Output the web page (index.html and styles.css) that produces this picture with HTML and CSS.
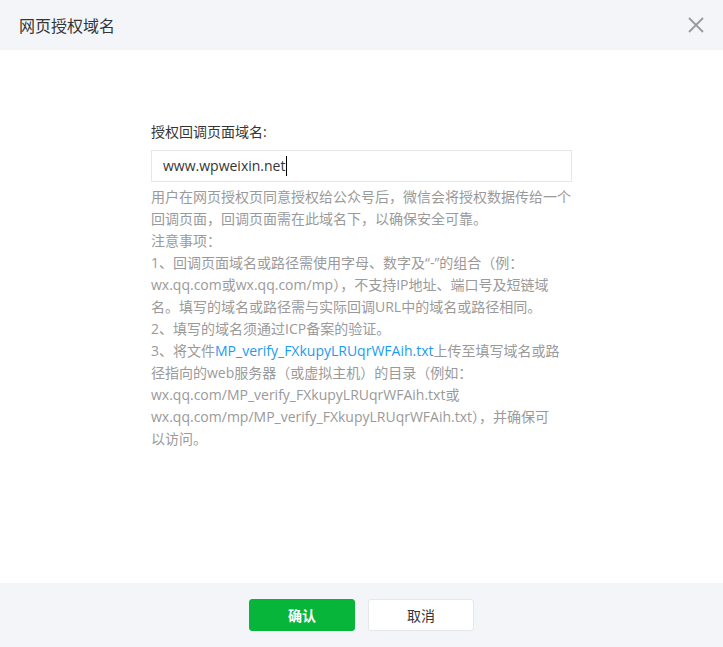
FILE: index.html
```html
<!DOCTYPE html>
<html lang="zh-CN">
<head>
  <meta charset="UTF-8" />
  <meta name="viewport" content="width=device-width, initial-scale=1.0" />
  <title>网页授权域名</title>
  <link rel="stylesheet" href="styles.css">
</head>
<body>
  <div class="dialog">
    <!-- 标题栏 -->
    <div class="dialog-hd">
      <h3>网页授权域名</h3>
      <button class="close-btn" aria-label="关闭">
        <svg width="16" height="16" viewBox="0 0 16 16">
          <path d="M1 1L15 15M15 1L1 15" stroke="#9a9a9a" stroke-width="1.8" fill="none" />
        </svg>
      </button>
    </div>

    <!-- 内容 -->
    <div class="dialog-bd">
      <div class="form">
        <label class="form-label">授权回调页面域名:</label>
        <div class="input-box">www.wpweixin.net<span class="caret"></span></div>
        <div class="tips">
          <p>用户在网页授权页同意授权给公众号后，微信会将授权数据传给一个<br>回调页面，回调页面需在此域名下，以确保安全可靠。</p>
          <p>注意事项：</p>
          <p>1、回调页面域名或路径需使用字母、数字及“-”的组合（例：<br>wx.qq.com或wx.qq.com/mp），不支持IP地址、端口号及短链域<br>名。填写的域名或路径需与实际回调URL中的域名或路径相同。</p>
          <p>2、填写的域名须通过ICP备案的验证。</p>
          <p>3、将文件<a href="#">MP_verify_FXkupyLRUqrWFAih.txt</a>上传至填写域名或路<br>径指向的web服务器（或虚拟主机）的目录（例如：<br>wx.qq.com/MP_verify_FXkupyLRUqrWFAih.txt或<br>wx.qq.com/mp/MP_verify_FXkupyLRUqrWFAih.txt），并确保可<br>以访问。</p>
        </div>
      </div>
    </div>

    <!-- 底部按钮 -->
    <div class="dialog-ft">
      <button class="btn btn-primary">确认</button>
      <button class="btn btn-default">取消</button>
    </div>
  </div>
</body>
</html>
```

FILE: styles.css
```css
* {
  box-sizing: border-box;
  margin: 0;
  padding: 0;
}

body {
  font-family: "Open Sans", "Noto Sans CJK SC", sans-serif;
  background-color: #fff;
  color: #353535;
}

.dialog {
  width: 723px;
  height: 647px;
  display: flex;
  flex-direction: column;
}

.dialog-hd {
  height: 50px;
  background-color: #f4f5f9;
  display: flex;
  justify-content: space-between;
  align-items: center;
  padding: 0 18px 0 19px;
}

.dialog-hd h3 {
  font-size: 16px;
  font-weight: normal;
  color: #353535;
}

.close-btn {
  background: none;
  border: none;
  cursor: pointer;
  width: 18px;
  height: 18px;
  display: flex;
  align-items: center;
  justify-content: center;
}

.dialog-bd {
  flex: 1;
  padding-top: 72px;
}

.form {
  width: 421px;
  margin-left: 151px;
}

.form-label {
  display: block;
  font-size: 14px;
  line-height: 20px;
  color: #353535;
  margin-bottom: 8px;
}

.input-box {
  height: 32px;
  border: 1px solid #e4e8eb;
  padding: 0 11px;
  font-size: 14px;
  line-height: 30px;
  color: #353535;
  display: flex;
  align-items: center;
}

.caret {
  display: inline-block;
  width: 1px;
  height: 20px;
  background-color: #000;
  margin-left: 1px;
}

.tips {
  width: 440px;
  margin-top: 4px;
  font-size: 14px;
  line-height: 22px;
  color: #9a9a9a;
}

.tips a {
  color: #1a9cf0;
  text-decoration: none;
}

.dialog-ft {
  height: 64px;
  background-color: #f4f5f9;
  display: flex;
  justify-content: center;
  align-items: center;
  gap: 13px;
}

.btn {
  width: 106px;
  height: 32px;
  border-radius: 3px;
  font-size: 14px;
  font-family: inherit;
  cursor: pointer;
}

.btn-primary {
  background-color: #07b53b;
  border: 1px solid #07b53b;
  color: #fff;
  font-weight: bold;
}

.btn-default {
  background-color: #fff;
  border: 1px solid #e4e8eb;
  color: #353535;
}
```
